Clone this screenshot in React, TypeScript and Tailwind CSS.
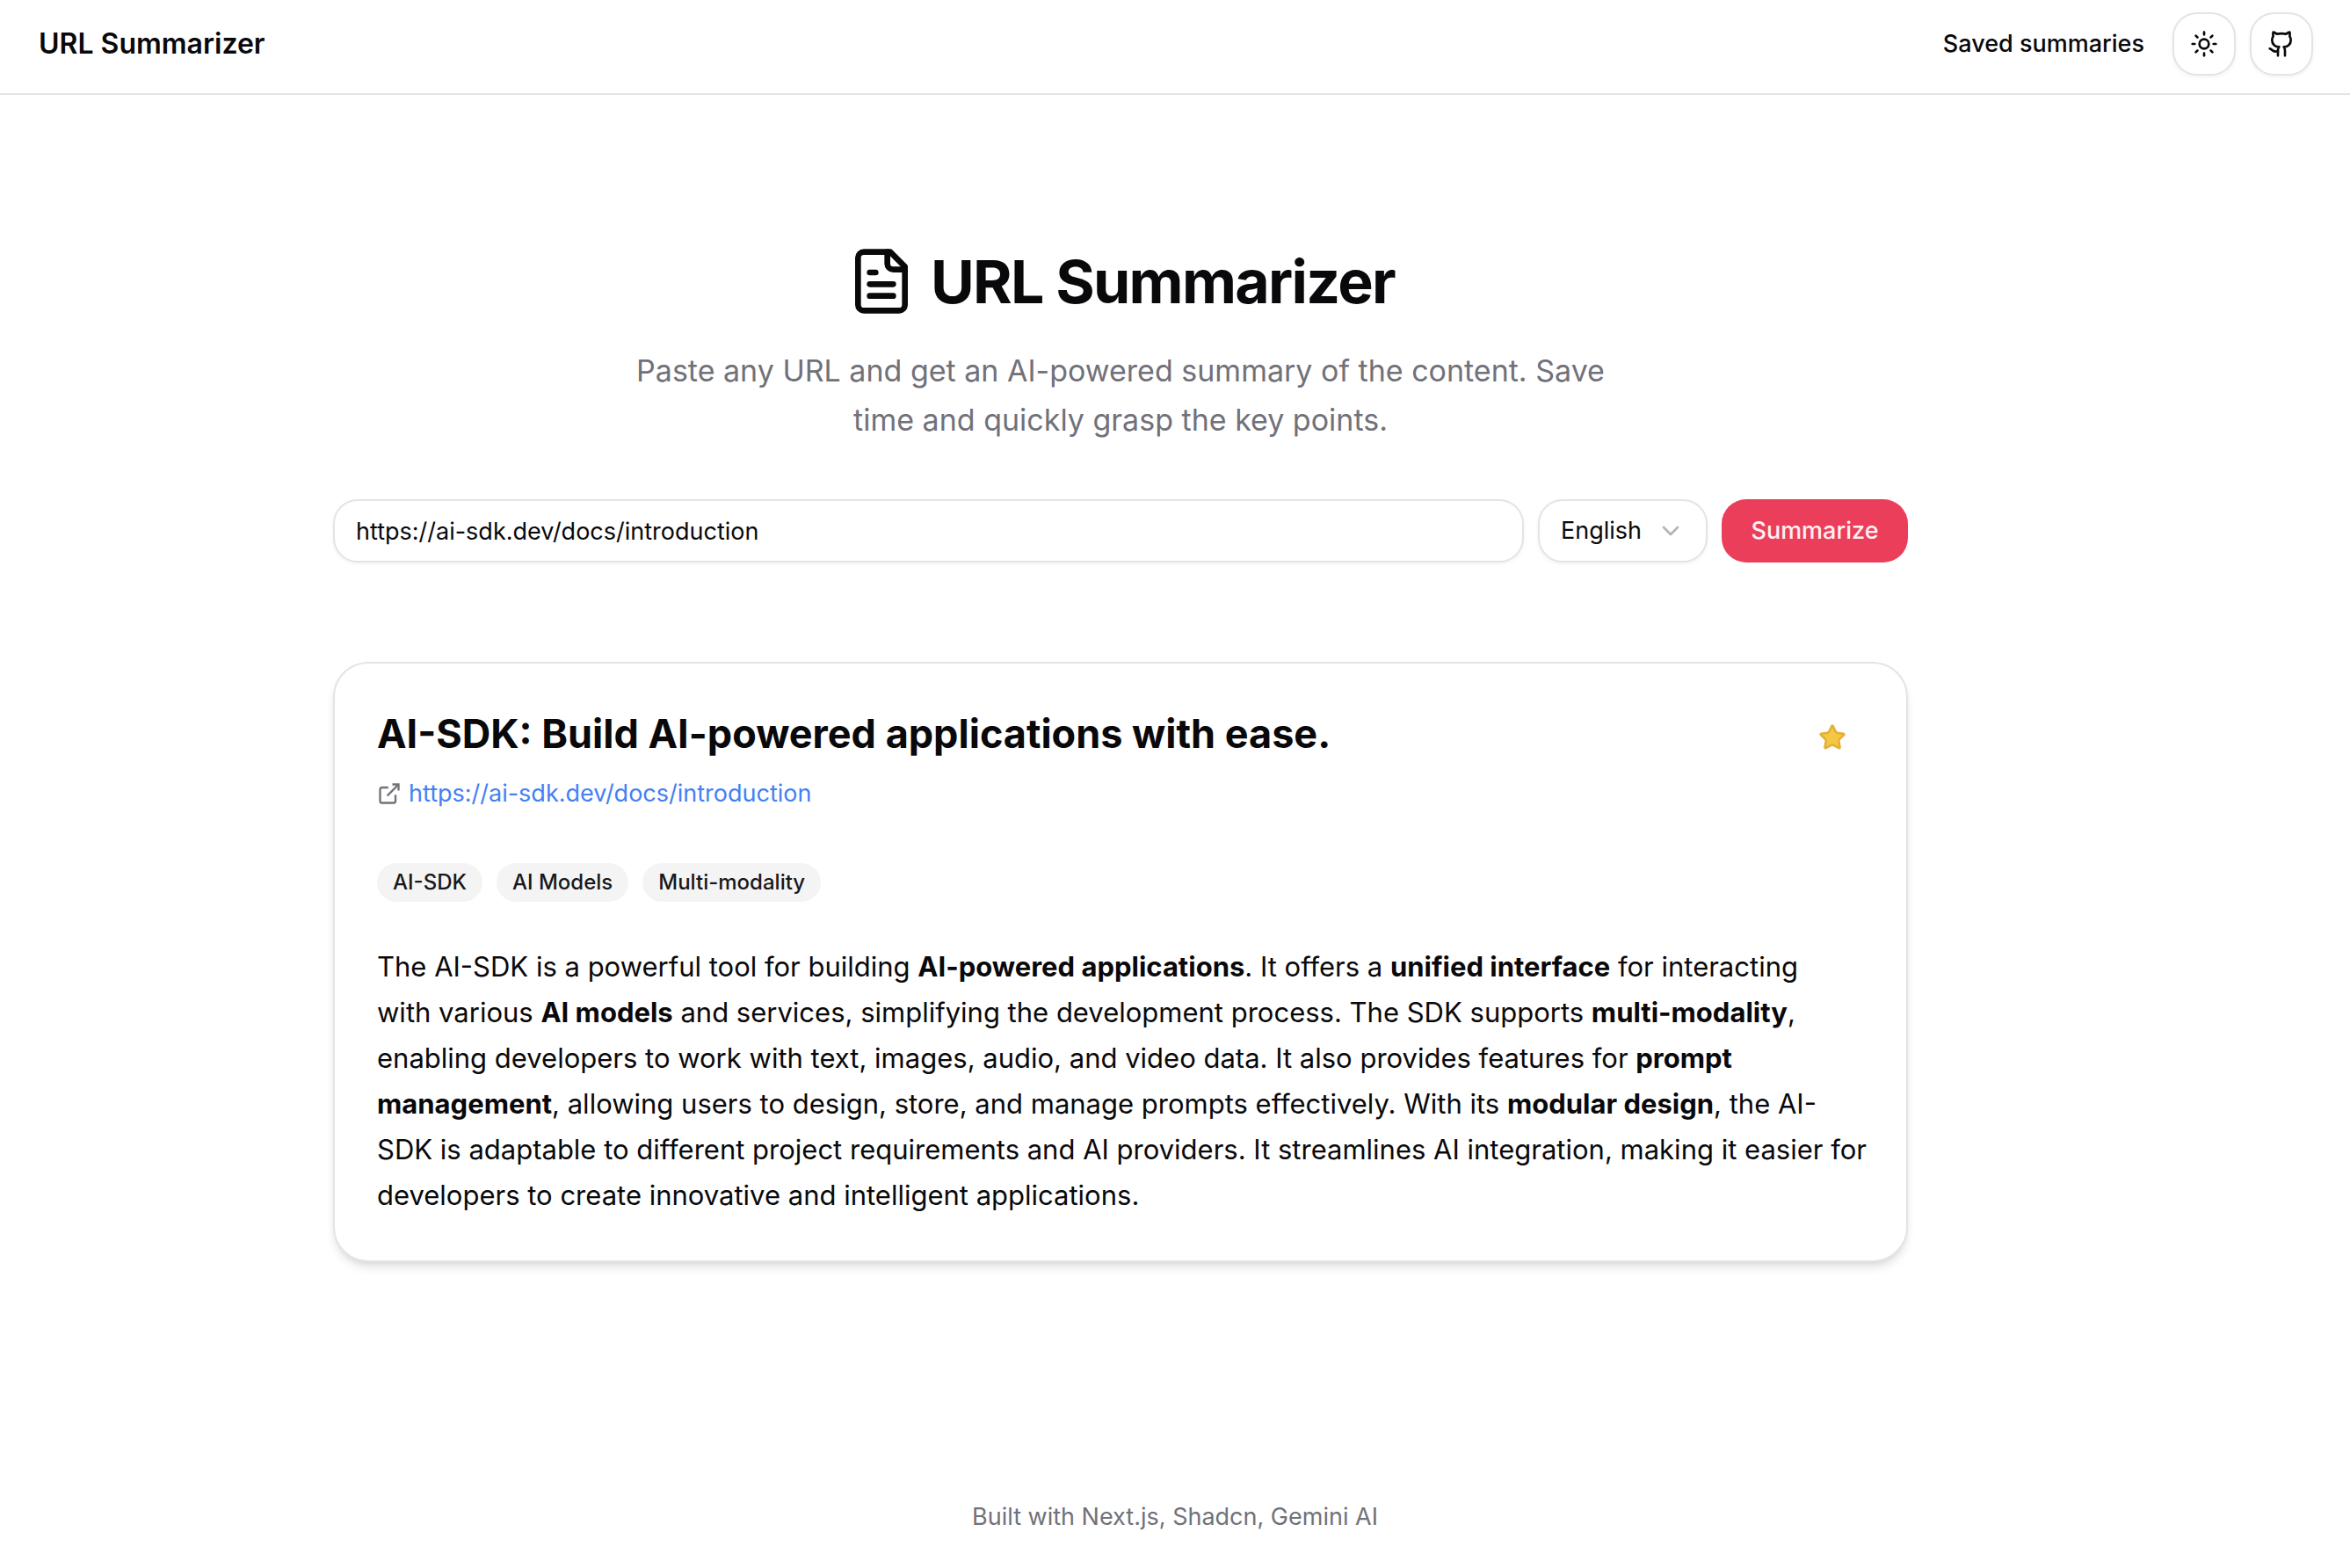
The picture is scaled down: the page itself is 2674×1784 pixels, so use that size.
import { useState } from "react";
import type { ReactNode } from "react";
import { ChevronDown, ExternalLink, Github, Star, Sun } from "lucide-react";

const SOURCE_URL = "https://ai-sdk.dev/docs/introduction";
const TAGS = ["AI-SDK", "AI Models", "Multi-modality"];

function DocumentIcon() {
  return (
    <svg
      className="size-20 shrink-0"
      viewBox="0 0 24 24"
      fill="none"
      stroke="currentColor"
      strokeWidth="2"
      strokeLinecap="round"
      strokeLinejoin="round"
      aria-hidden="true"
    >
      <path d="M15 2H6a2 2 0 0 0-2 2v16a2 2 0 0 0 2 2h12a2 2 0 0 0 2-2V7Z" />
      <path d="M14 2v4a2 2 0 0 0 2 2h4" />
      <path d="M10 9H8" />
      <path d="M16 13H8" />
      <path d="M16 17H8" />
    </svg>
  );
}

const iconButton =
  "flex size-[72px] items-center justify-center rounded-[28px] border-2 border-[#e4e4e5] bg-white shadow-[0_2px_4px_rgba(0,0,0,0.05)]";

function Header() {
  return (
    <header className="flex items-center justify-between border-b-2 border-[#e4e4e5] pt-3.5 pr-[42px] pb-5 pl-11">
      <a href="#" className="text-[32px] leading-10 font-semibold">
        URL Summarizer
      </a>
      <nav className="flex items-center gap-4">
        <a href="#saved" className="mr-4 text-[27px] leading-10 font-medium">
          Saved summaries
        </a>
        <button type="button" aria-label="Toggle theme" className={iconButton}>
          <Sun className="size-8" />
        </button>
        <a href="#github" aria-label="GitHub repository" className={iconButton}>
          <Github className="size-8" />
        </a>
      </nav>
    </header>
  );
}

function Hero() {
  return (
    <section className="flex flex-col items-center text-center">
      <h1 className="flex items-center gap-4 text-[68px] leading-[80px] font-bold tracking-tight">
        <DocumentIcon />
        URL Summarizer
      </h1>
      <p className="mt-[34px] max-w-[1180px] text-[34px] leading-[56px] text-[#71717a]">
        Paste any URL and get an AI-powered summary of the content. Save time and quickly grasp the
        key points.
      </p>
    </section>
  );
}

function SummarizeForm() {
  const [url, setUrl] = useState(SOURCE_URL);
  const field =
    "h-[72px] rounded-[28px] border-2 border-[#e4e4e5] bg-white text-[27px] shadow-[0_2px_4px_rgba(0,0,0,0.05)] outline-none";
  return (
    <form className="mt-[62px] flex gap-4" onSubmit={(e) => e.preventDefault()}>
      <input
        type="url"
        aria-label="URL to summarize"
        value={url}
        onChange={(e) => setUrl(e.target.value)}
        className={`${field} min-w-0 flex-1 px-6`}
      />
      <div className="relative">
        <select aria-label="Language" className={`${field} w-[193px] appearance-none pr-16 pl-6`}>
          <option>English</option>
          <option>Spanish</option>
          <option>French</option>
        </select>
        <ChevronDown className="pointer-events-none absolute top-5 right-[26px] size-8 text-[#b4b4b8]" />
      </div>
      <button
        type="submit"
        className="h-[72px] w-[212px] rounded-[28px] bg-[#eb3e5b] text-[27px] font-medium text-[#fff1f2]"
      >
        Summarize
      </button>
    </form>
  );
}

function Strong({ children }: { children: ReactNode }) {
  return <strong className="font-bold">{children}</strong>;
}

/* Line break that only applies on wide screens. */
function WideBreak() {
  return <br className="hidden 2xl:inline" />;
}

function SummaryCard() {
  return (
    <article className="mt-[113px] rounded-[40px] border-2 border-[#e4e4e5] bg-white p-12 shadow-[0_8px_12px_-2px_rgba(0,0,0,0.1),0_4px_8px_-4px_rgba(0,0,0,0.1)]">
      <div className="flex items-start justify-between">
        <div>
          <h2 className="text-[45px] leading-[64px] font-bold">
            AI-SDK: Build AI-powered applications with ease.
          </h2>
          <div className="mt-4 flex items-center gap-2 text-[27px] leading-10">
            <ExternalLink
              className="size-7 text-[#71717a]"
              strokeLinecap="butt"
              strokeLinejoin="miter"
            />
            <a href={SOURCE_URL} className="text-[#4480f4]">
              {SOURCE_URL}
            </a>
          </div>
        </div>
        <button
          type="button"
          aria-label="Remove from saved summaries"
          className="flex size-[72px] items-center justify-center rounded-[28px]"
        >
          <Star className="size-8 fill-[#f5c843] text-[#e4b137]" />
        </button>
      </div>
      <ul className="mt-[59px] flex flex-wrap gap-4">
        {TAGS.map((tag) => (
          <li
            key={tag}
            className="rounded-full bg-[#f4f4f4] px-[18px] py-1.5 text-[24px] leading-8 font-medium text-[#18181b]"
          >
            {tag}
          </li>
        ))}
      </ul>
      <p className="mt-12 -mr-2 text-[31px] leading-[52px]">
        The AI-SDK is a powerful tool for building <Strong>AI-powered applications</Strong>. It
        offers a <Strong>unified interface</Strong> for interacting <WideBreak />
        with various <Strong>AI models</Strong> and services, simplifying the development process.
        The SDK supports <Strong>multi-modality</Strong>, <WideBreak />
        enabling developers to work with text, images, audio, and video data. It also provides
        features for <Strong>prompt</Strong> <WideBreak />
        <Strong>management</Strong>, allowing users to design, store, and manage prompts
        effectively. With its <Strong>modular design</Strong>, the AI-
        <WideBreak />
        SDK is adaptable to different project requirements and AI providers. It streamlines AI
        integration, making it easier for <WideBreak />
        developers to create innovative and intelligent applications.
      </p>
    </article>
  );
}

export default function App() {
  return (
    <div className="flex min-h-screen flex-col bg-white font-['Inter',sans-serif] text-[#09090b]">
      <Header />
      <main className="flex-1 pt-[172px] pr-[124px] pb-24">
        <div className="mx-auto max-w-[1792px]">
          <Hero />
          <SummarizeForm />
          <SummaryCard />
        </div>
      </main>
      <footer className="pb-[38px] text-center text-[27px] leading-10 text-[#71717a]">
        Built with Next.js, Shadcn, Gemini AI
      </footer>
    </div>
  );
}
